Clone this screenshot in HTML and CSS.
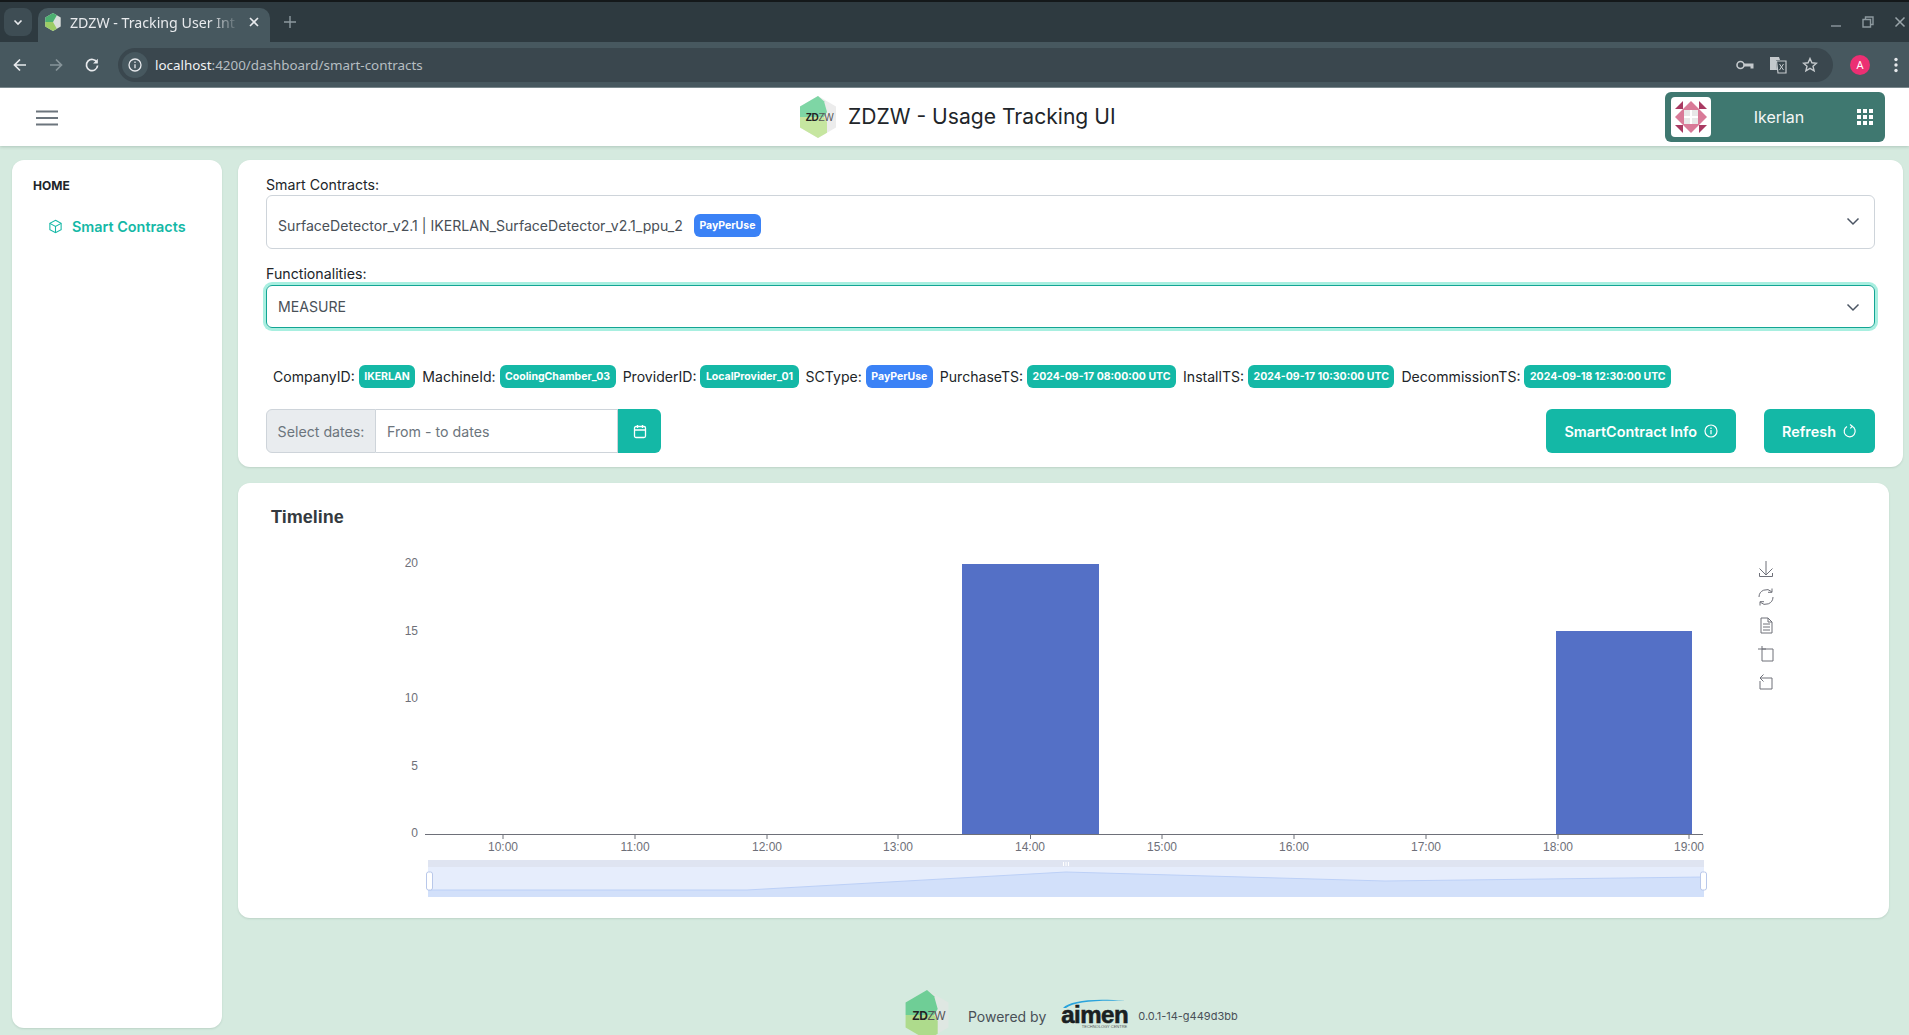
FILE: index.html
```html
<!DOCTYPE html>
<html lang="en">
<head>
  <meta charset="UTF-8">
  <meta name="viewport" content="width=device-width, initial-scale=1">
  <title>ZDZW - Tracking User Interface</title>
  <link rel="stylesheet" href="styles.css">
</head>
<body>
  <div class="tabstrip">
    <div class="tab-list-btn">
      <svg width="12" height="12" viewBox="0 0 12 12"><path d="M2.5 4.5 6 8l3.5-3.5" fill="none" stroke="#e8eaed" stroke-width="1.6"/></svg>
    </div>
    <div class="tab">
      <svg class="tab-fav" width="16" height="18" viewBox="0 0 36 42"><path d="M18 0 36 10.500V31.500L18 42 0 31.500V10.500Z" fill="#d9dedb"/><path d="M18 0 0 10.500V21H18L27 5.200Z" fill="#4caf70"/><path d="M0 21V31.500L18 42 27 36.800 18 21Z" fill="#9ccc65"/></svg>
      <span class="tab-title">ZDZW - Tracking User Int</span>
      <svg class="tab-close" width="12" height="12" viewBox="0 0 12 12"><path d="m2 2 8 8M10 2l-8 8" stroke="#e8eaed" stroke-width="1.6"/></svg>
    </div>
    <svg class="tab-new" width="14" height="14" viewBox="0 0 14 14"><path d="M7 1v12M1 7h12" stroke="#8d999f" stroke-width="1.4"/></svg>
    <div class="win-btns">
      <svg width="12" height="12" viewBox="0 0 12 12"><path d="M1 10h10" stroke="#8d999f" stroke-width="1.4"/></svg>
      <svg width="12" height="12" viewBox="0 0 12 12"><path d="M3.500 3V1h7.500v7.500H9M1 3.500h7.500V11H1Z" fill="none" stroke="#8d999f" stroke-width="1.400"/></svg>
      <svg width="12" height="12" viewBox="0 0 12 12"><path d="m1.500 1.500 9 9M10.500 1.500l-9 9" stroke="#9aa5aa" stroke-width="1.500"/></svg>
    </div>
  </div>

  <div class="toolbar">
    <svg class="nav-icon" width="16" height="16" viewBox="0 0 16 16"><path d="M14 8H2.500M8 2.500 2.500 8 8 13.500" fill="none" stroke="#e8eaed" stroke-width="1.700"/></svg>
    <svg class="nav-icon" width="16" height="16" viewBox="0 0 16 16"><path d="M2 8h11.500M8 2.500 13.500 8 8 13.500" fill="none" stroke="#87949a" stroke-width="1.700"/></svg>
    <svg class="nav-icon" width="16" height="16" viewBox="0 0 16 16"><path d="M13 5.500A5.600 5.600 0 1 0 13.600 8.500" fill="none" stroke="#e8eaed" stroke-width="1.700"/><path d="M13.800 1.800V6.500H9.100Z" fill="#e8eaed"/></svg>
    <div class="omnibox">
      <span class="site-info">
        <svg width="14" height="14" viewBox="0 0 14 14"><circle cx="7" cy="7" r="6" fill="none" stroke="#e8eaed" stroke-width="1.300"/><path d="M7 6.200v4M7 3.600v1.400" stroke="#e8eaed" stroke-width="1.300"/></svg>
      </span>
      <span class="url"><b>localhost</b>:4200/dashboard/smart-contracts</span>
      <span class="omni-icons">
        <svg width="18" height="12" viewBox="0 0 18 12"><circle cx="4.500" cy="6" r="3.500" fill="none" stroke="#c4c9cc" stroke-width="1.600"/><path d="M8 4.500h9.500v5h-3V7.500H8Z" fill="#c4c9cc"/></svg>
        <svg width="18" height="18" viewBox="0 0 18 18"><path d="M1 1h9l1 3H7l1 10H1Z" fill="#c4c9cc"/><path d="M7.500 5h9.500v12H9Z" fill="none" stroke="#c4c9cc" stroke-width="1.200"/><path d="m10.500 8 4 6M14.500 8l-4 6" stroke="#c4c9cc"/></svg>
        <svg width="16" height="16" viewBox="0 0 16 16"><path d="m8 1.500 1.900 4.300 4.600.4-3.500 3 1.100 4.600L8 11.400l-4.100 2.400L5 9.200l-3.500-3 4.600-.4Z" fill="none" stroke="#c4c9cc" stroke-width="1.400"/></svg>
      </span>
    </div>
    <span class="avatar">A</span>
    <svg class="kebab" width="4" height="16" viewBox="0 0 4 16"><circle cx="2" cy="2.500" r="1.700" fill="#e8eaed"/><circle cx="2" cy="8" r="1.700" fill="#e8eaed"/><circle cx="2" cy="13.500" r="1.700" fill="#e8eaed"/></svg>
  </div>

  <header class="topbar">
    <svg class="hamburger" width="22" height="16" viewBox="0 0 22 16"><path d="M0 1.500h22M0 8h22M0 14.500h22" stroke="#6c757d" stroke-width="1.800"/></svg>
    <div class="brand">
      <svg width="38" height="42" viewBox="0 0 36 42"><path d="M18 0 36 10.500V31.500L18 42 0 31.500V10.500Z" fill="#ececec"/><path d="M18 0 0 10.500V21H24L27 16 24 5.200Z" fill="#7ed6a5"/><path d="M0 21V31.500L18 42 27 36.800V26L24 21Z" fill="#c6e6a0"/><text x="19.500" y="24.800" class="brand-mark"><tspan font-weight="700" fill="#222">ZD</tspan><tspan fill="#555">ZW</tspan></text></svg>
      <h1>ZDZW - Usage Tracking UI</h1>
    </div>
    <div class="org">
      <span class="org-logo">
        <svg width="32" height="32" viewBox="0 0 32 32"><path d="M16 0 32 16 16 32 0 16Z" fill="#d97a98"/><rect x="9" y="9" width="14" height="14" fill="#e8e8e8"/><path d="M16 9v14M9 16h14" stroke="#fff" stroke-width="2"/><path d="M8 0V8H0ZM24 0 32 8H24ZM0 24H8V32ZM24 24H32L24 32Z" fill="#a93a62"/></svg>
      </span>
      <span class="org-name">Ikerlan</span>
      <svg width="16" height="16" viewBox="0 0 16 16" fill="#fff"><rect width="4" height="4"/><rect x="6" width="4" height="4"/><rect x="12" width="4" height="4"/><rect y="6" width="4" height="4"/><rect x="6" y="6" width="4" height="4"/><rect x="12" y="6" width="4" height="4"/><rect y="12" width="4" height="4"/><rect x="6" y="12" width="4" height="4"/><rect x="12" y="12" width="4" height="4"/></svg>
    </div>
  </header>

  <div class="layout">
    <aside class="sidebar">
      <div class="side-title">HOME</div>
      <a class="side-link">
        <svg width="15" height="15" viewBox="0 0 24 24" fill="none" stroke="#14b8a6" stroke-width="1.700"><path d="M12 2 21 7v10l-9 5-9-5V7Z"/><path d="m3 7 9 5 9-5M12 12v10"/></svg>
        Smart Contracts
      </a>
    </aside>

    <main class="content">
      <section class="card filters">
        <label class="field-label">Smart Contracts:</label>
        <div class="select select-tall">
          <span>SurfaceDetector_v2.1 | IKERLAN_SurfaceDetector_v2.1_ppu_2</span>
          <span class="badge badge-blue badge-first">PayPerUse</span>
          <svg class="chev" width="14" height="14" viewBox="0 0 14 14"><path d="m1.500 4.500 5.500 5.500 5.500-5.500" fill="none" stroke="#4b5563" stroke-width="1.500"/></svg>
        </div>
        <label class="field-label label-second">Functionalities:</label>
        <div class="select select-focus">
          <span>MEASURE</span>
          <svg class="chev" width="14" height="14" viewBox="0 0 14 14"><path d="m1.500 4.500 5.500 5.500 5.500-5.500" fill="none" stroke="#4b5563" stroke-width="1.500"/></svg>
        </div>

        <div class="info-row">
          <span>CompanyID:</span><span class="badge">IKERLAN</span>
          <span>MachineId:</span><span class="badge">CoolingChamber_03</span>
          <span>ProviderID:</span><span class="badge">LocalProvider_01</span>
          <span>SCType:</span><span class="badge badge-blue">PayPerUse</span>
          <span>PurchaseTS:</span><span class="badge">2024-09-17 08:00:00 UTC</span>
          <span>InstallTS:</span><span class="badge">2024-09-17 10:30:00 UTC</span>
          <span>DecommissionTS:</span><span class="badge">2024-09-18 12:30:00 UTC</span>
        </div>

        <div class="actions">
          <div class="date-group">
            <span class="date-addon">Select dates:</span>
            <span class="date-input">From - to dates</span>
            <span class="date-btn">
              <svg width="14" height="15" viewBox="0 0 14 15" fill="none" stroke="#fff" stroke-width="1.300"><rect x="1.500" y="2.500" width="11" height="11" rx="1.500"/><path d="M1.500 6h11M4.500 1v3M9.500 1v3"/></svg>
            </span>
          </div>
          <button class="btn btn-info" type="button">SmartContract Info
            <svg width="14" height="14" viewBox="0 0 14 14" fill="none" stroke="#fff" stroke-width="1.200"><circle cx="7" cy="7" r="6"/><path d="M7 6v4.200M7 3.500v1.400"/></svg>
          </button>
          <button class="btn" type="button">Refresh
            <svg width="14" height="14" viewBox="0 0 14 14" fill="none" stroke="#fff" stroke-width="1.200"><path d="M9 2.300A5.500 5.500 0 1 1 4 2.500"/><path d="M7 .5 9.300 2.300 7.300 4.300"/></svg>
          </button>
        </div>
      </section>

      <section class="card chart-card">
        <h2>Timeline</h2>
        <svg class="chart" viewBox="238 483 1651 435">
          <g class="axis-label" text-anchor="end">
            <text x="418" y="567">20</text>
            <text x="418" y="635">15</text>
            <text x="418" y="702">10</text>
            <text x="418" y="770">5</text>
            <text x="418" y="837">0</text>
          </g>
          <rect x="962" y="564" width="137" height="270" fill="#5470c6"/>
          <rect x="1556" y="631" width="136" height="203" fill="#5470c6"/>
          <path d="M425 834.500H1703" stroke="#6e7079"/>
          <path d="M503 834v5M635 834v5M767 834v5M898 834v5M1030.500 834v5M1162 834v5M1294 834v5M1426 834v5M1558 834v5M1689 834v5" stroke="#6e7079"/>
          <g class="axis-label" text-anchor="middle">
            <text x="503" y="851">10:00</text>
            <text x="635" y="851">11:00</text>
            <text x="767" y="851">12:00</text>
            <text x="898" y="851">13:00</text>
            <text x="1030" y="851">14:00</text>
            <text x="1162" y="851">15:00</text>
            <text x="1294" y="851">16:00</text>
            <text x="1426" y="851">17:00</text>
            <text x="1558" y="851">18:00</text>
            <text x="1689" y="851">19:00</text>
          </g>

          <rect x="428" y="860" width="1276" height="7" fill="#dfe4f1"/>
          <rect x="428" y="867" width="1276" height="30" fill="#e6edfc"/>
          <path d="M428 890H747L1066 872 1385 881 1704 877V897H428Z" fill="#d2e0fa"/>
          <path d="M428 890H747L1066 872 1385 881 1704 877" fill="none" stroke="#bcd0f7"/>
          <rect x="426.500" y="872" width="6" height="18" rx="2" fill="#fff" stroke="#b9c8ea"/>
          <rect x="1700.500" y="872" width="6" height="18" rx="2" fill="#fff" stroke="#b9c8ea"/>
          <path d="M1063.500 862v4M1066 862v4M1068.500 862v4" stroke="#fff"/>

          <g fill="none" stroke="#6e7079" stroke-width="1">
            <path d="M1759.500 573v3.500h13V573M1766 561v14M1759.500 568.500l6.500 6.500 6.500-6.500"/>
            <path d="M1759 597a7.500 7.500 0 0 1 12.800-5.200M1773 597a7.500 7.500 0 0 1-12.800 5.200M1772 588.500v3.800H1768M1760 605.500v-3.800H1764"/>
            <path d="M1761 618h7l4 4v11h-11ZM1768 618v4h4M1763 624h7M1763 627h7M1763 630h7"/>
            <path d="M1762 649h11v12h-11v-15M1758 649h8"/>
            <path d="M1760 678h12v11h-12v-8M1760 678l3.500-3.500M1760 678l3.500 3.500"/>
          </g>
        </svg>
      </section>

      <footer class="page-foot">
        <svg width="44" height="50" viewBox="0 0 36 42"><path d="M18 0 36 10.500V31.500L18 42 0 31.500V10.500Z" fill="#dfe7e2"/><path d="M18 0 0 10.500V21H24L27 16 24 5.200Z" fill="#6fce96"/><path d="M0 21V31.500L18 42 27 36.800V26L24 21Z" fill="#aedb8c"/><text x="19.500" y="24.800" class="brand-mark"><tspan font-weight="700" fill="#222">ZD</tspan><tspan fill="#555">ZW</tspan></text></svg>
        <span class="powered">Powered by</span>
        <span class="aimen">
          <svg class="aimen-arc" width="66" height="10" viewBox="0 0 66 10"><path d="M1 9C8 2 30-1 64 2 32 1 12 3 4 9Z" fill="#29a3dc"/></svg>
          <span class="aimen-word">aimen</span>
          <span class="aimen-sub">TECHNOLOGY CENTRE</span>
        </span>
        <span class="version">0.0.1-14-g449d3bb</span>
      </footer>
    </main>
  </div>
</body>
</html>
```
FILE: styles.css
```css
:root {
  --teal: #14b8a6;
  --blue: #3b82f6;
  --bg: #d5eadf;
  --gray-border: #ced4da;
  --text: #343a40;
  font-family: 'Inter', 'Liberation Sans', sans-serif;
  color: var(--text);
}

* {
  box-sizing: border-box;
}

html, body {
  height: 100%;
}

body {
  margin: 0;
  background: var(--bg);
  display: flex;
  flex-direction: column;
  height: 1035px;
  overflow: hidden;
}

/* browser chrome */
.tabstrip {
  height: 42px;
  flex: none;
  background: #2e3a40;
  border-top: 2px solid #14181a;
  display: flex;
  align-items: flex-start;
  padding: 6px 0 0 4px;
  font-family: 'Noto Sans', sans-serif;
}

.tab-list-btn {
  width: 28px;
  height: 28px;
  border-radius: 8px;
  background: #3e4d54;
  display: flex;
  align-items: center;
  justify-content: center;
}

.tab {
  width: 232px;
  height: 34px;
  margin-left: 6px;
  background: #47585f;
  border-radius: 10px 10px 0 0;
  display: flex;
  align-items: center;
  padding: 0 10px 6px 7px;
  color: #e8eaed;
  font-size: 14.200px;
}

.tab-fav {
  flex: none;
}

.tab-title {
  margin-left: 9px;
  flex: 1;
  white-space: nowrap;
  overflow: hidden;
  -webkit-mask-image: linear-gradient(90deg, #000 82%, transparent);
  mask-image: linear-gradient(90deg, #000 82%, transparent);
}

.tab-close {
  flex: none;
  margin-left: 8px;
}

.tab-new {
  margin: 7px 0 0 13px;
}

.win-btns {
  margin: 8px 3px 0 auto;
  display: flex;
  gap: 20px;
}

.toolbar {
  height: 46px;
  flex: none;
  background: #47585f;
  border-bottom: 1px solid #7d8a90;
  display: flex;
  align-items: center;
  padding-left: 12px;
  font-family: 'Noto Sans', sans-serif;
}

.nav-icon {
  margin-right: 20px;
}

.omnibox {
  margin-left: -2px;
  width: 1715px;
  height: 34px;
  border-radius: 17px;
  background: #3a474e;
  display: flex;
  align-items: center;
  padding-left: 4px;
  color: #b6bec2;
  font-size: 13.400px;
}

.site-info {
  width: 26px;
  height: 26px;
  border-radius: 50%;
  background: #47585f;
  display: flex;
  align-items: center;
  justify-content: center;
}

.url {
  margin-left: 7px;
}

.url b {
  font-weight: 400;
  color: #f1f3f4;
}

.omni-icons {
  margin-left: auto;
  margin-right: 15px;
  display: flex;
  align-items: center;
  gap: 15px;
}

.avatar {
  width: 20px;
  height: 20px;
  margin-left: 17px;
  border-radius: 50%;
  background: #ec2f73;
  color: #fff;
  font-size: 11px;
  display: flex;
  align-items: center;
  justify-content: center;
}

.kebab {
  margin-left: 24px;
}

/* app header */
.topbar {
  height: 58px;
  flex: none;
  background: #fff;
  box-shadow: 0 1px 3px rgba(90, 120, 105, 0.3);
  display: flex;
  align-items: center;
  position: relative;
  padding: 0 24px 0 36px;
}

.hamburger {
  margin-top: 1px;
}

.brand {
  position: absolute;
  left: 799px;
  top: 8px;
  display: flex;
  align-items: center;
  gap: 11px;
}

.brand h1 {
  margin: -2px 0 0;
  font-size: 21.100px;
  font-weight: 400;
  color: #212529;
  white-space: nowrap;
}

.brand-mark {
  font-family: 'Liberation Sans', sans-serif;
  font-size: 10px;
  letter-spacing: -0.3px;
  text-anchor: middle;
}

.org {
  margin-left: auto;
  width: 220px;
  height: 50px;
  background: #3f7870;
  border-radius: 6px;
  display: flex;
  align-items: center;
  padding: 0 12px 0 6px;
  color: #f3f6f5;
  font-size: 16px;
}

.org-logo {
  width: 40px;
  height: 40px;
  background: #fff;
  border-radius: 4px;
  display: flex;
  align-items: center;
  justify-content: center;
}

.org-name {
  flex: 1;
  text-align: center;
  padding-right: 10px;
}

/* page */
.layout {
  flex: 1;
  min-height: 0;
  display: flex;
  gap: 16px;
  padding: 14px 6px 0 12px;
}

.sidebar {
  width: 210px;
  height: 868px;
  flex: none;
  background: #fff;
  border-radius: 12px;
  box-shadow: 0 1px 2px rgba(90, 120, 105, 0.2);
  padding: 18px 21px;
}

.side-title {
  font-size: 12px;
  font-weight: 700;
  color: #212529;
  line-height: 16px;
}

.side-link {
  display: flex;
  align-items: center;
  gap: 9px;
  margin: 24px 0 0 15px;
  color: var(--teal);
  font-size: 14.400px;
  font-weight: 600;
  white-space: nowrap;
}

.content {
  flex: 1;
  min-width: 0;
  display: flex;
  flex-direction: column;
}

.card {
  flex: none;
  background: #fff;
  border-radius: 12px;
  box-shadow: 0 1px 2px rgba(90, 120, 105, 0.2);
}

.filters {
  height: 307px;
  padding: 16px 28px 14px 28px;
  font-size: 14.200px;
}

.field-label {
  display: block;
  line-height: 18px;
  color: #212529;
}

.label-second {
  margin-top: 16px;
}

.select {
  height: 43px;
  margin-top: 1px;
  border: 1px solid var(--gray-border);
  border-radius: 6px;
  display: flex;
  align-items: center;
  padding: 0 11px;
  color: #495057;
  font-size: 14.100px;
}

.select-tall {
  height: 54px;
  padding-top: 7px;
}

.select-focus {
  margin-top: 2px;
  border-color: #12a594;
  box-shadow: 0 0 0 3px #a8efe0;
}

.chev {
  margin-left: auto;
  margin-right: 3px;
}

.select-tall .chev {
  margin-top: -9px;
}

.badge {
  height: 23px;
  padding: 0 5.500px;
  border-radius: 6px;
  background: var(--teal);
  color: #fff;
  font-size: 10.500px;
  font-weight: 700;
  display: inline-flex;
  align-items: center;
  white-space: nowrap;
}

.badge-blue {
  background: var(--blue);
}

.badge-first {
  margin-left: 11px;
}

.info-row {
  margin-top: 37px;
  padding-left: 7px;
  display: flex;
  align-items: center;
  gap: 4px;
  color: #212529;
  font-size: 14.070px;
  white-space: nowrap;
}

.info-row .badge + span {
  margin-left: 3px;
}

.actions {
  margin-top: 21px;
  display: flex;
  align-items: stretch;
  height: 44px;
}

.date-group {
  display: flex;
  width: 395px;
  margin-right: auto;
}

.date-addon {
  width: 110px;
  background: #e9ecef;
  border: 1px solid var(--gray-border);
  border-radius: 6px 0 0 6px;
  color: #6c757d;
  display: flex;
  align-items: center;
  justify-content: center;
}

.date-input {
  flex: 1;
  border: 1px solid var(--gray-border);
  border-left: 0;
  color: #6c757d;
  display: flex;
  align-items: center;
  padding-left: 11px;
}

.date-btn {
  width: 43px;
  background: var(--teal);
  border-radius: 0 6px 6px 0;
  display: flex;
  align-items: center;
  justify-content: center;
}

.btn {
  border: 0;
  border-radius: 6px;
  background: var(--teal);
  color: #fff;
  font-family: inherit;
  font-size: 14.400px;
  font-weight: 600;
  padding: 0 18px;
  display: flex;
  align-items: center;
  gap: 7px;
}

.btn-info {
  margin-right: 28px;
}

.chart-card {
  width: 1651px;
  height: 435px;
  margin-top: 16px;
  position: relative;
}

.chart-card h2 {
  margin: 0;
  padding: 23px 0 0 33px;
  font-family: 'Liberation Sans', sans-serif;
  font-size: 18px;
  font-weight: 700;
  line-height: 22px;
  color: var(--text);
}

.chart {
  position: absolute;
  left: 0;
  top: 0;
  width: 1651px;
  height: 435px;
}

.axis-label {
  font-family: 'Liberation Sans', sans-serif;
  font-size: 12px;
  fill: #6e7079;
}

/* footer */
.page-foot {
  flex: none;
  margin-top: 72px;
  height: 50px;
  display: flex;
  align-items: flex-start;
  padding-left: 667px;
}

.powered {
  margin: 18px 0 0 19px;
  font-size: 14px;
  color: #495057;
  line-height: 18px;
  white-space: nowrap;
}

.aimen {
  margin: 9px 0 0 15px;
  width: 66px;
  height: 30px;
  position: relative;
  flex: none;
}

.aimen-arc {
  position: absolute;
  left: 1px;
  top: 0;
}

.aimen-word {
  position: absolute;
  left: 0;
  top: 4px;
  font-family: 'Liberation Sans', sans-serif;
  font-size: 24px;
  font-weight: 700;
  line-height: 24px;
  letter-spacing: -0.5px;
  color: #1a1f22;
  -webkit-text-stroke: 0.6px #1a1f22;
}

.aimen-sub {
  position: absolute;
  right: 0;
  top: 25px;
  font-family: 'Liberation Sans', sans-serif;
  font-size: 4px;
  line-height: 5px;
  color: #555;
  white-space: nowrap;
}

.version {
  margin: 17px 0 0 11px;
  font-size: 11px;
  line-height: 18px;
  color: #495057;
  white-space: nowrap;
}
```
